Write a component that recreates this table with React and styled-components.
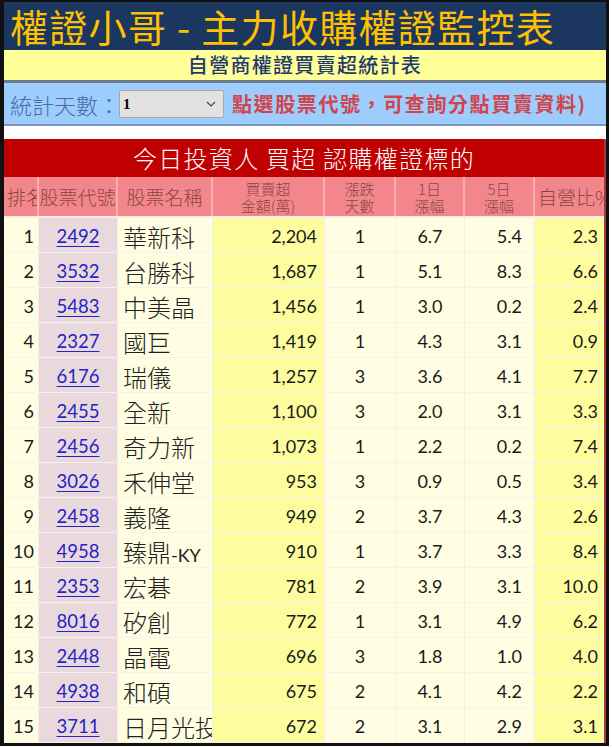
import React from "react";
import styled, { createGlobalStyle } from "styled-components";

const GlobalStyle = createGlobalStyle`
  html, body {
    margin: 0;
    padding: 0;
    background: #ffffff;
  }
`;

const CJK = `"Noto Sans CJK TC", "Noto Sans", sans-serif`;
const NUM = `Lato, "Noto Sans CJK TC", sans-serif`;

const COLS = "35px 79px 95px 112px 71px 69px 70px 69px";

const Frame = styled.div`
  width: 609px;
  height: 746px;
  box-sizing: border-box;
  border: 3px solid #111;
  border-left-width: 4px;
  border-top-width: 2px;
  overflow: hidden;
  background: #fff;
  display: flex;
  flex-direction: column;
`;

const TitleBar = styled.div`
  height: 48px;
  flex: none;
  background: #1b365f;
  color: #ffc000;
  font-family: ${CJK};
  font-size: 38px;
  line-height: 48px;
  padding-left: 6px;
  letter-spacing: 1.3px;
  white-space: nowrap;
  overflow: hidden;
`;

const SubBar = styled.div`
  height: 30px;
  flex: none;
  background: #ffff99;
  border-bottom: 3px solid #6d7a8c;
  color: #1f3a6e;
  font-family: ${CJK};
  font-weight: 500;
  font-size: 20px;
  line-height: 30px;
  text-align: center;
  letter-spacing: 1.3px;
`;

const FilterBar = styled.div`
  height: 41px;
  flex: none;
  background: #9dcdfd;
  border-bottom: 2px solid #7d96c6;
  display: flex;
  align-items: center;
  padding-left: 6px;
  gap: 8px;
  white-space: nowrap;
`;

const FilterLabel = styled.span`
  font-family: ${CJK};
  font-weight: 300;
  font-size: 22px;
  color: #4a6aa6;
  margin-right: -9px;
`;

const SelectWrap = styled.div`
  position: relative;
  width: 105px;
  height: 28px;
  flex: none;
`;

const Select = styled.select`
  appearance: none;
  width: 100%;
  height: 100%;
  box-sizing: border-box;
  background: #e2e2e2;
  border: 1px solid #a9a9a9;
  border-radius: 2px;
  font-family: "Liberation Serif", serif;
  font-weight: bold;
  font-size: 15px;
  color: #000;
  padding-left: 3px;
`;

const Chevron = styled.svg`
  position: absolute;
  right: 8px;
  top: 11px;
  pointer-events: none;
`;

const Hint = styled.span`
  font-family: ${CJK};
  font-weight: 700;
  font-size: 20px;
  color: #d2444c;
  letter-spacing: 1.6px;
`;

const Spacer = styled.div`
  height: 13px;
  flex: none;
`;

const Table = styled.div`
  width: 602px;
  box-sizing: border-box;
  border-right: 2px solid #a83a3a;
`;

const TableTitle = styled.div`
  height: 38px;
  background: #c00000;
  color: #fff;
  font-family: ${CJK};
  font-weight: 300;
  font-size: 24px;
  line-height: 38px;
  text-align: center;
  letter-spacing: 1.3px;
`;

const HeadRow = styled.div`
  display: grid;
  grid-template-columns: ${COLS};
  height: 41px;
  box-sizing: border-box;
  border-bottom: 2px solid #f5efe8;
  background: #f3868a;
`;

const HeadCell = styled.div`
  overflow: hidden;
  white-space: nowrap;
  box-sizing: border-box;
  border-right: 2px solid #f8aeb0;
  display: flex;
  flex-direction: column;
  align-items: ${(p) => (p.$left ? "flex-start" : "center")};
  justify-content: center;
  padding-left: ${(p) => (p.$left ? "3px" : "0")};
  color: #8a4646;
  font-family: ${CJK};
  font-weight: 300;
  font-size: ${(p) => (p.$two ? "15px" : "19px")};
  line-height: ${(p) => (p.$two ? "17px" : "39px")};
  &:last-child {
    border-right: none;
  }
`;

const HeadLine = styled.span`
  display: block;
  height: 17px;
  line-height: 17px;
`;

const Row = styled.div`
  display: grid;
  grid-template-columns: ${COLS};
  height: 35px;
  box-sizing: border-box;
  border-bottom: 1px solid #f6f1ea;
`;

const Cell = styled.div`
  box-sizing: border-box;
  background: ${(p) => p.$bg};
  border-right: 1px solid #f3eee6;
  display: flex;
  align-items: center;
  justify-content: ${(p) =>
    p.$align === "left" ? "flex-start" : p.$align === "center" ? "center" : "flex-end"};
  padding: ${(p) => p.$pad || "0"};
  padding-top: 2px;
  font-family: ${NUM};
  font-size: 18px;
  color: #1a1a1a;
  white-space: nowrap;
  overflow: hidden;
  &:last-child {
    border-right: none;
  }
`;

const CodeLink = styled.a`
  color: #2424c8;
  text-decoration: underline;
  text-underline-offset: 3px;
  font-family: ${NUM};
  font-size: 18.5px;
`;

const Name = styled.span`
  font-family: ${CJK};
  font-weight: 300;
  font-size: 24px;
  color: #222;
`;

const NameSuffix = styled.span`
  font-family: ${NUM};
  font-size: 18px;
  font-weight: 400;
`;

const LIGHT = "#fffee2";
const CODE = "#ead9dc";
const YELLOW = "#fdfd9f";

const rows = [
  [1, "2492", "華新科", "2,204", 1, "6.7", "5.4", "2.3"],
  [2, "3532", "台勝科", "1,687", 1, "5.1", "8.3", "6.6"],
  [3, "5483", "中美晶", "1,456", 1, "3.0", "0.2", "2.4"],
  [4, "2327", "國巨", "1,419", 1, "4.3", "3.1", "0.9"],
  [5, "6176", "瑞儀", "1,257", 3, "3.6", "4.1", "7.7"],
  [6, "2455", "全新", "1,100", 3, "2.0", "3.1", "3.3"],
  [7, "2456", "奇力新", "1,073", 1, "2.2", "0.2", "7.4"],
  [8, "3026", "禾伸堂", "953", 3, "0.9", "0.5", "3.4"],
  [9, "2458", "義隆", "949", 2, "3.7", "4.3", "2.6"],
  [10, "4958", "臻鼎-KY", "910", 1, "3.7", "3.3", "8.4"],
  [11, "2353", "宏碁", "781", 2, "3.9", "3.1", "10.0"],
  [12, "8016", "矽創", "772", 1, "3.1", "4.9", "6.2"],
  [13, "2448", "晶電", "696", 3, "1.8", "1.0", "4.0"],
  [14, "4938", "和碩", "675", 2, "4.1", "4.2", "2.2"],
  [15, "3711", "日月光投", "672", 2, "3.1", "2.9", "3.1"],
];

const renderName = (name) => {
  const i = name.indexOf("-");
  if (i < 0) return <Name>{name}</Name>;
  return (
    <Name>
      {name.slice(0, i)}
      <NameSuffix>{name.slice(i)}</NameSuffix>
    </Name>
  );
};

export default function App() {
  return (
    <>
      <GlobalStyle />
      <Frame>
        <TitleBar>權證小哥 - 主力收購權證監控表</TitleBar>
        <SubBar>自營商權證買賣超統計表</SubBar>
        <FilterBar>
          <FilterLabel>統計天數：</FilterLabel>
          <SelectWrap>
            <Select defaultValue="1">
              <option value="1">1</option>
              <option value="2">2</option>
              <option value="3">3</option>
              <option value="5">5</option>
            </Select>
            <Chevron width="10" height="6" viewBox="0 0 10 6">
              <path d="M1 1 L5 5 L9 1" fill="none" stroke="#444" strokeWidth="1.2" />
            </Chevron>
          </SelectWrap>
          <Hint>點選股票代號，可查詢分點買賣資料)</Hint>
        </FilterBar>
        <Spacer />
        <Table>
          <TableTitle>今日投資人 買超 認購權證標的</TableTitle>
          <HeadRow>
            <HeadCell $left>排名</HeadCell>
            <HeadCell>股票代號</HeadCell>
            <HeadCell>股票名稱</HeadCell>
            <HeadCell $two>
              <HeadLine>買賣超</HeadLine>
              <HeadLine>金額(萬)</HeadLine>
            </HeadCell>
            <HeadCell $two>
              <HeadLine>漲跌</HeadLine>
              <HeadLine>天數</HeadLine>
            </HeadCell>
            <HeadCell $two>
              <HeadLine>1日</HeadLine>
              <HeadLine>漲幅</HeadLine>
            </HeadCell>
            <HeadCell $two>
              <HeadLine>5日</HeadLine>
              <HeadLine>漲幅</HeadLine>
            </HeadCell>
            <HeadCell $left>自營比%</HeadCell>
          </HeadRow>
          {rows.map((r) => (
            <Row key={r[0]}>
              <Cell $bg={LIGHT} $pad="0 4px 0 0">{r[0]}</Cell>
              <Cell $bg={CODE} $align="center">
                <CodeLink href="#">{r[1]}</CodeLink>
              </Cell>
              <Cell $bg={LIGHT} $align="left" $pad="0 0 0 5px">
                {renderName(r[2])}
              </Cell>
              <Cell $bg={YELLOW} $pad="0 7px 0 0">{r[3]}</Cell>
              <Cell $bg={LIGHT} $align="center">{r[4]}</Cell>
              <Cell $bg={LIGHT} $align="center">{r[5]}</Cell>
              <Cell $bg={LIGHT} $pad="0 12px 0 0">{r[6]}</Cell>
              <Cell $bg={YELLOW} $pad="0 6px 0 0">{r[7]}</Cell>
            </Row>
          ))}
        </Table>
      </Frame>
    </>
  );
}
